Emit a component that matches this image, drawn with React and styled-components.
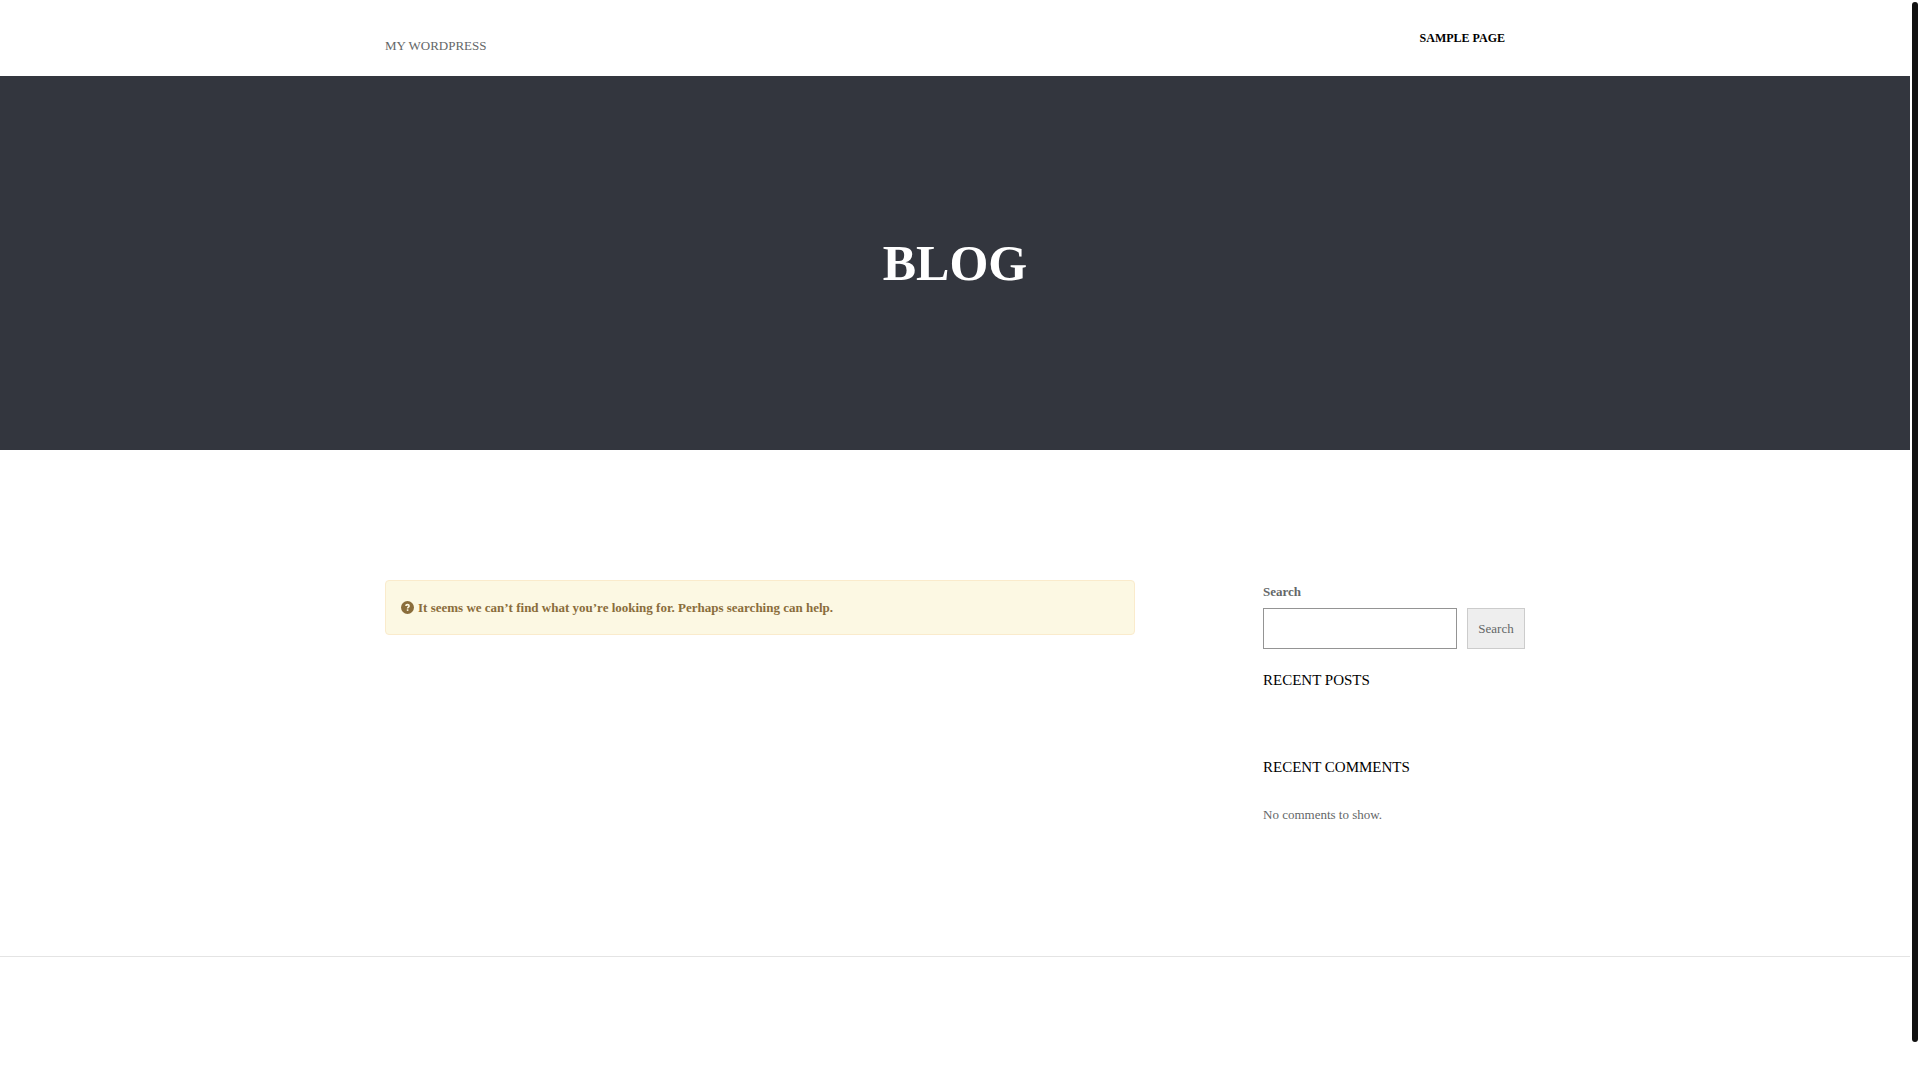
import React, { useState } from 'react';
import styled, { createGlobalStyle } from 'styled-components';

const GlobalStyle = createGlobalStyle`
  *, *::before, *::after {
    box-sizing: border-box;
  }
  body {
    margin: 0;
    padding-right: 10px;
    background: #fff;
    color: #646768;
    font-family: 'Liberation Serif', 'Times New Roman', serif;
    font-size: 13px;
    line-height: 26px;
    text-rendering: optimizeSpeed;
  }
`;

const Wrap = styled.div`
  max-width: 1170px;
  margin: 0 auto;
  padding: 0 15px;
`;

const Header = styled.header`
  background: #fff;
`;

const HeaderInner = styled(Wrap)`
  display: flex;
  justify-content: space-between;
  align-items: flex-start;
  min-height: 76px;
`;

const Logo = styled.a`
  padding-top: 33px;
  color: #646768;
  text-decoration: none;
  text-transform: uppercase;
`;

const Nav = styled.nav`
  padding: 25px 20px 0 0;
`;

const NavLink = styled.a`
  color: #000;
  font-size: 12px;
  font-weight: 700;
  text-decoration: none;
  text-transform: uppercase;
`;

const Hero = styled.section`
  display: flex;
  align-items: center;
  justify-content: center;
  padding: 155px 15px;
  background: #33363e;
`;

const HeroTitle = styled.h1`
  margin: 0;
  color: #fff;
  font-size: 50px;
  font-weight: 700;
  line-height: 64px;
  text-transform: uppercase;
`;

const Content = styled(Wrap)`
  display: grid;
  grid-template-columns: minmax(0, 375fr) minmax(0, 131fr);
  column-gap: 128px;
  align-items: start;
  padding-top: 130px;
  padding-bottom: 128px;
`;

const Alert = styled.div`
  display: flex;
  align-items: center;
  gap: 4px;
  padding: 14px 15px;
  background: #fcf8e3;
  border: 1px solid #faebcc;
  border-radius: 4px;
  color: #8a6d3b;
  font-weight: 700;
  line-height: 25px;
`;

const Sidebar = styled.aside`
  display: flex;
  flex-direction: column;
`;

const SearchLabel = styled.label`
  display: block;
  margin-bottom: 4px;
  line-height: 24px;
  font-weight: 700;
`;

const SearchRow = styled.div`
  display: flex;
  gap: 10px;
`;

const SearchInput = styled.input`
  flex: 1;
  min-width: 0;
  height: 41px;
  padding: 8px;
  background: #fff;
  border: 1px solid #949494;
  border-radius: 0;
  color: #646768;
  font: inherit;
`;

const SearchButton = styled.button`
  min-width: 58px;
  padding: 0 10px;
  background: #eee;
  border: 1px solid #ccc;
  color: #646768;
  font: inherit;
  cursor: pointer;
`;

const WidgetTitle = styled.h2`
  margin: 0;
  color: #000;
  font-size: 15px;
  font-weight: 400;
  line-height: 27px;
  text-transform: uppercase;
`;

const SearchWidget = styled.div`
  margin-bottom: 18px;
`;

const Widget = styled.section`
  margin-bottom: 60px;

  &:last-child {
    margin-bottom: 0;
  }
`;

const Note = styled.p`
  margin: 21px 0 0;
`;

const Footer = styled.footer`
  min-height: 123px;
  border-top: 1px solid #e4e4e4;
`;

const ScrollThumb = styled.div`
  position: fixed;
  top: 2px;
  right: 2px;
  bottom: 38px;
  width: 6px;
  border-radius: 3px;
  background: #111;
`;

const QuestionIcon = () => (
  <svg width="13" height="13" viewBox="0 0 13 13" aria-hidden="true">
    <circle cx="6.5" cy="6.5" r="6.5" fill="#8a6d3b" />
    <path
      d="M4.9 5.1C4.9 3.1 8.1 3.2 8.1 5C8.1 6.1 6.6 6.1 6.6 7.4"
      fill="none"
      stroke="#fcf8e3"
      strokeWidth="1.6"
    />
    <rect x="5.8" y="8.3" width="1.6" height="1.6" fill="#fcf8e3" />
  </svg>
);

const SearchForm = () => {
  const [query, setQuery] = useState('');

  return (
    <form role="search" onSubmit={e => e.preventDefault()}>
      <SearchLabel htmlFor="search">Search</SearchLabel>
      <SearchRow>
        <SearchInput
          id="search"
          type="search"
          value={query}
          onChange={e => setQuery(e.target.value)}
        />
        <SearchButton type="submit">Search</SearchButton>
      </SearchRow>
    </form>
  );
};

const App = () => {
  return (
    <>
      <GlobalStyle />
      <Header>
        <HeaderInner>
          <Logo href="#">My WordPress</Logo>
          <Nav>
            <NavLink href="#sample-page">Sample Page</NavLink>
          </Nav>
        </HeaderInner>
      </Header>
      <Hero>
        <HeroTitle>Blog</HeroTitle>
      </Hero>
      <Content as="main">
        <Alert>
          <QuestionIcon />
          It seems we can’t find what you’re looking for. Perhaps searching can help.
        </Alert>
        <Sidebar>
          <SearchWidget>
            <SearchForm />
          </SearchWidget>
          <Widget>
            <WidgetTitle>Recent Posts</WidgetTitle>
          </Widget>
          <Widget>
            <WidgetTitle>Recent Comments</WidgetTitle>
            <Note>No comments to show.</Note>
          </Widget>
        </Sidebar>
      </Content>
      <Footer />
      <ScrollThumb />
    </>
  );
};

export default App;
